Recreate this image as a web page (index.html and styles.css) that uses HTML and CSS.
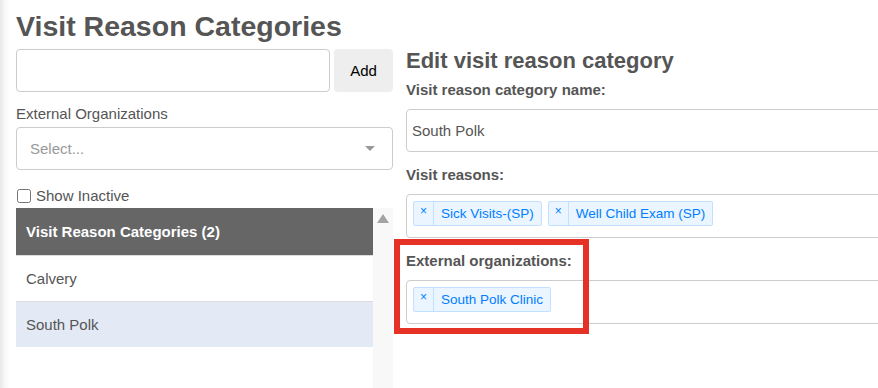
FILE: index.html
```html
<!DOCTYPE html>
<html lang="en">
<head>
  <meta charset="UTF-8" />
  <title>Visit Reason Categories</title>
  <link rel="stylesheet" href="styles.css">
</head>
<body>

<div class="page">
  <h1 class="page-title">Visit Reason Categories</h1>

  <div class="columns">
    <!-- Category list -->
    <div class="sidebar">
      <div class="add-row">
        <input type="text" class="text-input add-input" />
        <button class="btn-add">Add</button>
      </div>

      <div class="side-label">External Organizations</div>
      <div class="select-box">
        <span class="placeholder">Select...</span>
        <span class="select-arrow"></span>
      </div>

      <label class="check-row"><input type="checkbox" /> Show Inactive</label>

      <div class="list-wrap">
        <div class="list">
          <div class="list-header">Visit Reason Categories (2)</div>
          <div class="list-item">Calvery</div>
          <div class="list-item selected">South Polk</div>
        </div>
        <div class="scroll-col"><span class="scroll-up"></span></div>
      </div>
    </div>

    <!-- Editor -->
    <div class="editor">
      <h2 class="editor-title">Edit visit reason category</h2>

      <div class="field">
        <div class="field-label">Visit reason category name:</div>
        <input type="text" class="text-input name-input" value="South Polk" />
      </div>

      <div class="field">
        <div class="field-label">Visit reasons:</div>
        <div class="multi-box">
          <span class="tag"><span class="tag-x">×</span><span class="tag-label">Sick Visits-(SP)</span></span>
          <span class="tag"><span class="tag-x">×</span><span class="tag-label">Well Child Exam (SP)</span></span>
        </div>
      </div>

      <div class="field highlighted">
        <div class="field-label">External organizations:</div>
        <div class="multi-box">
          <span class="tag"><span class="tag-x">×</span><span class="tag-label">South Polk Clinic</span></span>
        </div>
        <div class="annotation"></div>
      </div>
    </div>
  </div>
</div>

</body>
</html>
```

FILE: styles.css
```css
:root {
  --text: #555;
  --border: #ccc;
  --tag-bg: #ebf5ff;
  --tag-border: #c2e0ff;
  --tag-text: #007eff;
  --mark: #e63226;
  --font: 'Liberation Sans', Arial, sans-serif;
}

* {
  box-sizing: border-box;
  margin: 0;
  padding: 0;
}

body {
  font-family: var(--font);
  font-size: 15px;
  color: var(--text);
  background: linear-gradient(to right, #e8e8e8, #f8f8f8 5px, #fff 10px);
  overflow: hidden;
  height: 388px;
}

.page {
  padding-left: 16px;
}

.page-title {
  font-size: 28.5px;
  font-weight: bold;
  line-height: 31px;
  padding-top: 11px;
  margin-bottom: 7px;
  color: var(--text);
}

.columns {
  display: flex;
  align-items: flex-start;
}

/* Sidebar */
.sidebar {
  width: 377px;
  flex-shrink: 0;
}

.add-row {
  display: flex;
  gap: 4px;
  height: 43px;
}

.text-input {
  border: 1px solid var(--border);
  border-radius: 4px;
  font-family: var(--font);
  font-size: 15px;
  color: var(--text);
  outline: none;
  background: #fff;
}

.add-input {
  width: 314px;
  height: 43px;
}

.btn-add {
  width: 59px;
  height: 43px;
  border: none;
  border-radius: 4px;
  background: #eee;
  font-family: var(--font);
  font-size: 15px;
  color: #000;
}

.side-label {
  line-height: 20px;
  margin-top: 12px;
  margin-bottom: 3px;
}

.select-box {
  height: 43px;
  border: 1px solid var(--border);
  border-radius: 4px;
  display: flex;
  align-items: center;
  justify-content: space-between;
  padding: 0 17px 0 13px;
}

.placeholder {
  color: #999;
}

.select-arrow {
  width: 0;
  height: 0;
  border-style: solid;
  border-width: 5px 5px 2.5px;
  border-color: #999 transparent transparent;
  margin-top: 2px;
}

.check-row {
  display: flex;
  align-items: center;
  line-height: 20px;
  margin-top: 16px;
  margin-bottom: 2px;
}

.check-row input {
  width: 14px;
  height: 14px;
  margin: 0 5px 0 1px;
}

.list-wrap {
  display: flex;
  height: 200px;
}

.list {
  width: 357px;
}

.list-header {
  height: 47px;
  display: flex;
  align-items: center;
  padding-left: 10px;
  background: #666;
  color: #fff;
  font-weight: bold;
}

.list-item {
  height: 46px;
  display: flex;
  align-items: center;
  padding-left: 10px;
  border-top: 1px solid #ddd;
}

.list-item.selected {
  background: #e3eaf5;
}

.scroll-col {
  width: 20px;
  background: #f8f8f8;
  display: flex;
  justify-content: center;
  padding-top: 6px;
}

.scroll-up {
  width: 0;
  height: 0;
  border-left: 6.5px solid transparent;
  border-right: 6.5px solid transparent;
  border-bottom: 9px solid #a3a3a3;
}

/* Editor */
.editor {
  width: 540px;
  flex-shrink: 0;
  margin-left: 13px;
}

.editor-title {
  font-size: 22px;
  font-weight: bold;
  line-height: 24px;
  margin-bottom: 7px;
  color: var(--text);
}

.field {
  margin-bottom: 13px;
}

.field-label {
  font-weight: bold;
  line-height: 20px;
  margin-bottom: 9px;
}

.name-input {
  width: 100%;
  height: 43px;
  padding: 0 5px;
}

.multi-box {
  height: 44px;
  border: 1px solid var(--border);
  border-radius: 4px;
  display: flex;
  align-items: flex-start;
  gap: 6px;
  padding: 6px;
}

.tag {
  display: flex;
  height: 25px;
  border: 1px solid var(--tag-border);
  border-radius: 2px;
  background: var(--tag-bg);
  color: var(--tag-text);
  font-size: 13.5px;
}

.tag-x {
  width: 20px;
  border-right: 1px solid var(--tag-border);
  text-align: center;
  font-size: 12px;
  line-height: 19px;
}

.tag-label {
  line-height: 23px;
  padding: 0 7px;
}

/* Screenshot mark around the field */
.highlighted {
  position: relative;
}

.annotation {
  position: absolute;
  left: -12px;
  top: -12px;
  width: 195px;
  height: 95px;
  border: 6px solid var(--mark);
}
```
